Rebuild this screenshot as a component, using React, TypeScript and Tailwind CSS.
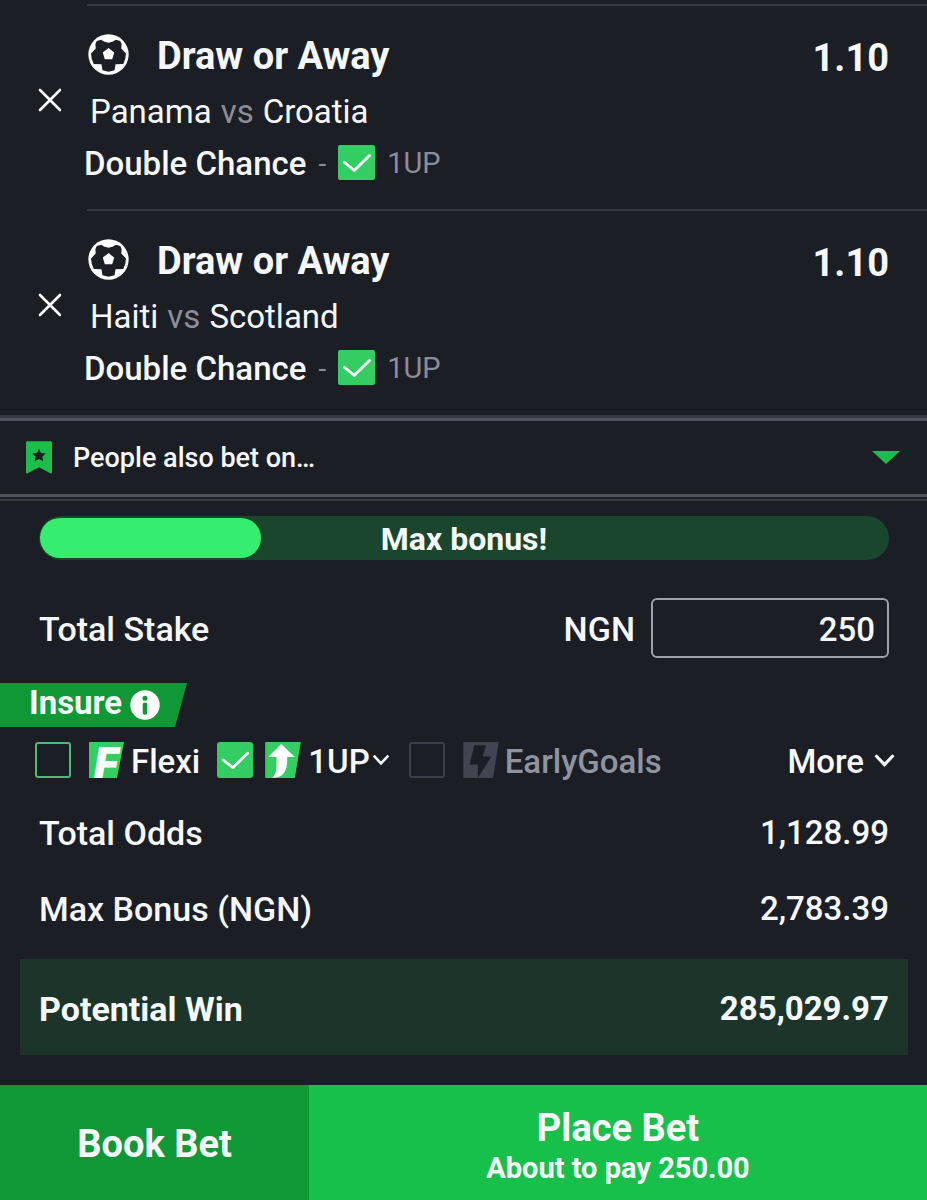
import { useState } from "react";
import clsx from "clsx";

type Selection = {
  id: string;
  pick: string;
  home: string;
  away: string;
  market: string;
  odds: string;
};

const selections: Selection[] = [
  {
    id: "pan-cro",
    pick: "Draw or Away",
    home: "Panama",
    away: "Croatia",
    market: "Double Chance",
    odds: "1.10",
  },
  {
    id: "hai-sco",
    pick: "Draw or Away",
    home: "Haiti",
    away: "Scotland",
    market: "Double Chance",
    odds: "1.10",
  },
];

const BallIcon = () => (
  <svg viewBox="38 38 122 122" className="size-[41px] shrink-0" aria-hidden="true">
    <circle cx="99" cy="99" r="60" fill="#fff" />
    <path
      d="M64 59 L77 55 L87 61 L99 64 L111 61 L121 55 L134 59 L138 68 L137 81 L151 96 L149 112 L143 127 L120 128 L117 146 L99 150 L81 146 L78 128 L55 127 L49 112 L47 96 L61 81 L60 68Z"
      fill="#1b1e25"
    />
    <path d="M99 80 L116 93 L110 113 L88 113 L82 93Z" fill="#fff" />
  </svg>
);

const CloseIcon = () => (
  <svg viewBox="0 0 24 24" className="size-6" fill="none" stroke="#fff" strokeWidth="2.6">
    <path d="M2 2 L22 22 M22 2 L2 22" strokeLinecap="round" />
  </svg>
);

const TickIcon = ({ className }: { className?: string }) => (
  <svg viewBox="0 0 37 35" className={className} fill="none" aria-hidden="true">
    <path
      d="M6.5 17.5 L16.3 25.5 L31.5 10.5"
      stroke="#fff"
      strokeWidth="2.8"
      strokeLinecap="round"
      strokeLinejoin="round"
    />
  </svg>
);

const BookmarkIcon = () => (
  <svg viewBox="78 123 78 97" className="h-[33px] w-[26px]" aria-hidden="true">
    <path
      d="M82 123H152Q156 123 156 127V216Q156 221 151 219L117 201L83 219Q78 221 78 216V127Q78 123 82 123Z"
      fill="#1bbd4b"
    />
    <path
      d="M117 145 L123 158 L137 159.500 L127 169 L130 183 L117 176 L104 183 L107 169 L97 159.500 L111 158Z"
      fill="#1b1e25"
    />
  </svg>
);

const InfoIcon = () => (
  <svg viewBox="0 0 30 30" className="size-[30px]" aria-hidden="true">
    <circle cx="15" cy="15" r="14.700" fill="#fff" />
    <circle cx="15" cy="8.300" r="2.500" fill="#109837" />
    <path d="M15 14.800V22.500" stroke="#109837" strokeWidth="4.600" strokeLinecap="round" />
  </svg>
);

const FlexiIcon = () => (
  <svg viewBox="0 0 35 36" className="h-9 w-[35px] overflow-visible" aria-hidden="true">
    <path d="M0 0H35L28 36H0Z" fill="#33cd62" />
    <text
      x="5"
      y="36"
      fontFamily="Inter, sans-serif"
      fontSize="42"
      fontWeight="900"
      fontStyle="italic"
      fill="#fff"
    >
      F
    </text>
  </svg>
);

const OneUpIcon = () => (
  <svg viewBox="168 36 107 108" className="size-9" aria-hidden="true">
    <path d="M168 36H275L257 144H168Z" fill="#33cd62" />
    <path
      d="M216 42L257 81H234V98Q232 130 210 140Q200 144 190 143Q202 131 202 108V81H177Z"
      fill="#fff"
    />
  </svg>
);

const EarlyGoalsIcon = () => (
  <svg viewBox="213 216 107 109" className="size-9" aria-hidden="true">
    <path d="M213 216H320L303 325H213Z" fill="#414552" />
    <path d="M246 226H282L272 260H298L257 325V284H232Z" fill="#1b1e25" />
  </svg>
);

const ChevronIcon = ({ className }: { className?: string }) => (
  <svg viewBox="0 0 20 14" className={className} fill="none" aria-hidden="true">
    <path d="M1.500 2 L10 11 L18.500 2" stroke="currentColor" strokeWidth="3" />
  </svg>
);

const SelectionRow = ({ selection }: { selection: Selection }) => (
  <li>
    <div className="ml-[87px] h-[2px] bg-[#363840]" />
    <div className="flex">
      <button
        type="button"
        aria-label={`Remove ${selection.home} vs ${selection.away}`}
        className="flex w-[84px] shrink-0 items-center pb-4 pl-[38px]"
      >
        <CloseIcon />
      </button>

      <div className="min-w-0 flex-1 pt-[22px] pb-[21px]">
        <div className="flex h-14 items-center pr-[38px] pl-1">
          <span className="pb-1">
            <BallIcon />
          </span>
          <h2 className="ml-7 flex-1 text-[38px] font-bold">{selection.pick}</h2>
          <span className="pt-1 text-[38px] font-bold">{selection.odds}</span>
        </div>
        <p className="flex h-14 items-center gap-[9px] pl-[6px] text-[33px]">
          {selection.home}
          <span className="text-[#8b8e98]">vs</span>
          {selection.away}
        </p>
        <div className="flex h-12 items-center text-[33px]">
          <span className="font-medium">{selection.market}</span>
          <span className="ml-3 text-[28px] text-[#8b8e98]">-</span>
          <span className="mb-1 ml-3 flex rounded-[2px] bg-[#33cd62]">
            <TickIcon className="h-[35px] w-[37px]" />
          </span>
          <span className="ml-3 text-[29px] text-[#8b8e98]">1UP</span>
        </div>
      </div>
    </div>
  </li>
);

type OptionBoxProps = {
  id: string;
  checked?: boolean;
  disabled?: boolean;
  onChange?: (checked: boolean) => void;
};

const OptionBox = ({ id, checked = false, disabled, onChange }: OptionBoxProps) => (
  <span className="grid shrink-0">
    <input
      id={id}
      type="checkbox"
      checked={checked}
      disabled={disabled}
      onChange={(e) => onChange?.(e.target.checked)}
      className={clsx(
        "col-start-1 row-start-1 size-9 appearance-none rounded-[3px] border-2 checked:border-[#33cd62] checked:bg-[#33cd62]",
        disabled ? "border-[#3b3e49]" : "border-[#55b678]"
      )}
    />
    {checked && (
      <TickIcon className="pointer-events-none col-start-1 row-start-1 size-9" />
    )}
  </span>
);

const SummaryRow = ({ label, value }: { label: string; value: string }) => (
  <div className="flex h-[76px] items-center justify-between pr-[38px] pl-[39px] text-[33px] font-medium">
    <dt className="text-[34px]">{label}</dt>
    <dd>{value}</dd>
  </div>
);

const App = () => {
  const [stake, setStake] = useState("250");
  const [flexi, setFlexi] = useState(false);
  const [oneUp, setOneUp] = useState(true);
  const bonusProgress = 26;

  return (
    <main className="flex min-h-screen flex-col bg-[#1b1e25] pt-1 font-[Roboto,sans-serif] text-[#f7f8fb]">
      <ul>
        {selections.map((selection) => (
          <SelectionRow key={selection.id} selection={selection} />
        ))}
      </ul>

      <div className="mt-px h-[3px] bg-[#373945]" />
      <button
        type="button"
        className="flex h-[79px] w-full items-center border-y-3 border-[#50525f] pr-[27px] pl-[26px] text-left"
      >
        <BookmarkIcon />
        <span className="ml-[21px] flex-1 pt-[2px] text-[27px] font-medium">
          People also bet on…
        </span>
        <svg viewBox="0 0 28 13" className="h-[13px] w-7" aria-hidden="true">
          <path d="M0 0H28L14 13Z" fill="#1bbd4b" />
        </svg>
      </button>
      <div className="mt-[2px] h-[2px] bg-[#373945]" />

      {/* Bonus progress */}
      <div className="mr-[38px] ml-[39px] mt-[15px] grid h-11 overflow-hidden rounded-full bg-[#1a462d]">
        <div className="col-start-1 row-start-1 py-[2px] pl-px">
          <div
            className="h-full rounded-full bg-[#36ee6e]"
            style={{ width: `${bonusProgress}%` }}
          />
        </div>
        <span className="col-start-1 row-start-1 self-center pt-[2px] text-center text-[32px] leading-10 font-bold">
          Max bonus!
        </span>
      </div>

      {/* Stake */}
      <div className="mt-[38px] flex items-center pr-[38px] pl-[39px] text-[34px] font-medium">
        <label htmlFor="stake" className="flex-1 pt-[2px]">
          Total Stake
        </label>
        <span className="pt-[2px]">NGN</span>
        <input
          id="stake"
          inputMode="decimal"
          value={stake}
          onChange={(e) => setStake(e.target.value)}
          className="ml-4 h-[60px] w-[238px] rounded-md border-2 border-[#9fa1a9] bg-transparent px-3 pt-[2px] text-right text-[33px] outline-none"
        />
      </div>

      {/* Insure options */}
      <button
        type="button"
        className="mt-[25px] flex h-11 w-[187px] items-center gap-2 bg-[#109837] pl-[29px] [clip-path:polygon(0_0,100%_0,calc(100%-12px)_100%,0_100%)]"
      >
        <span className="pb-1 text-[33px] leading-10 font-bold">Insure</span>
        <InfoIcon />
      </button>

      <div className="mt-[15px] flex h-9 items-center pr-8 pl-[35px] text-[33px]">
        <OptionBox id="flexi" checked={flexi} onChange={setFlexi} />
        <label htmlFor="flexi" className="ml-[18px] flex items-center gap-[7px] font-medium">
          <FlexiIcon />
          <span className="pt-1">Flexi</span>
        </label>
        <span className="ml-[17px] flex items-center">
          <OptionBox id="one-up" checked={oneUp} onChange={setOneUp} />
          <label htmlFor="one-up" className="ml-3 flex items-center gap-[7px] font-medium">
            <OneUpIcon />
            <span className="pt-1">1UP</span>
          </label>
          <ChevronIcon className="ml-[2px] h-3 w-[18px]" />
        </span>
        <span className="ml-[19px] flex items-center">
          <OptionBox id="early-goals" disabled />
          <label
            htmlFor="early-goals"
            className="ml-[18px] flex items-center gap-[6px] font-medium text-[#9093a0]"
          >
            <EarlyGoalsIcon />
            <span className="pt-1">EarlyGoals</span>
          </label>
        </span>
        <button type="button" className="ml-auto flex items-center gap-[10px] font-medium">
          <span className="pt-1">More</span>
          <ChevronIcon className="h-[15px] w-[21px]" />
        </button>
      </div>

      <dl className="mt-[17px]">
        <SummaryRow label="Total Odds" value="1,128.99" />
        <SummaryRow label="Max Bonus (NGN)" value="2,783.39" />
        <div className="mr-[19px] ml-5 mt-3 flex h-24 items-center justify-between bg-[#1c3429] px-[19px] pt-1 text-[33px] font-bold">
          <dt className="text-[34px]">Potential Win</dt>
          <dd>285,029.97</dd>
        </div>
      </dl>

      <footer className="mt-auto grid h-[115px] grid-cols-3">
        <button type="button" className="bg-[#109837] pt-1 text-[38px] font-bold">
          Book Bet
        </button>
        <button
          type="button"
          className="col-span-2 flex flex-col items-center justify-center bg-[#17c04a] pt-[6px] font-bold"
        >
          <span className="text-[38px] leading-[44px]">Place Bet</span>
          <span className="text-[29px] leading-9">About to pay {Number(stake || 0).toFixed(2)}</span>
        </button>
      </footer>
    </main>
  );
};

export default App;
